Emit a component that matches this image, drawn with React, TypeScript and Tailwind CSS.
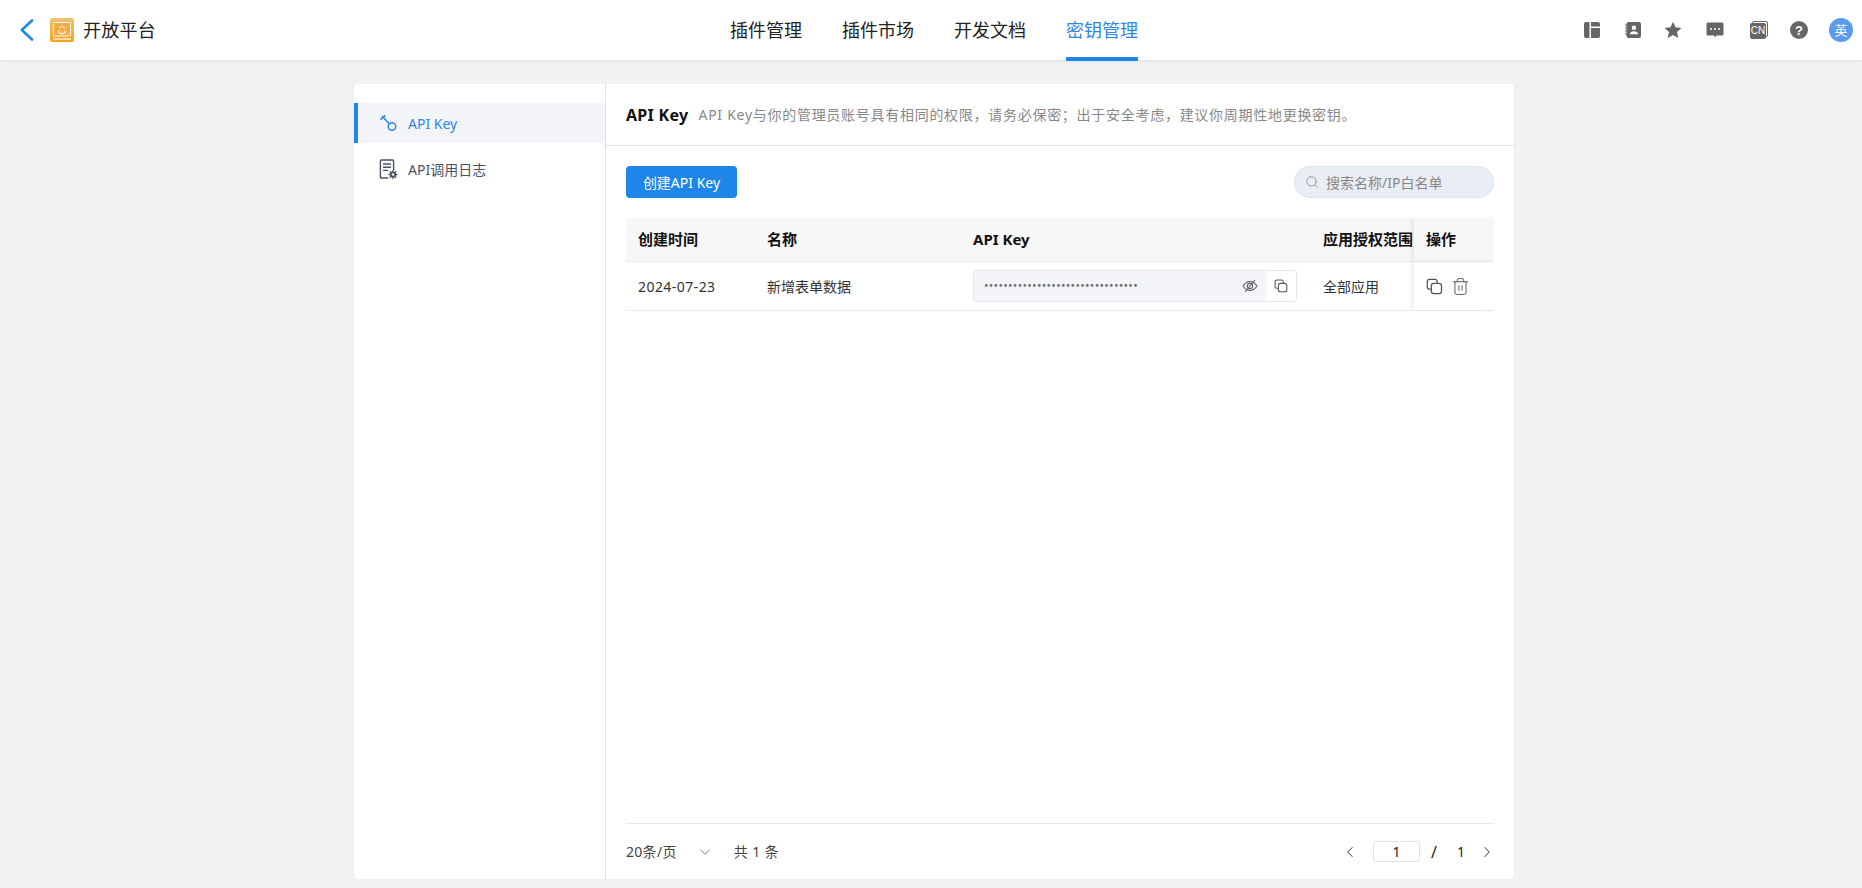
import { ChevronDown, ChevronLeft, ChevronRight, Search, Trash2 } from "lucide-react";

const font = "[font-family:'Noto_Sans','Noto_Sans_CJK_SC',sans-serif]";

function BackIcon() {
  return (
    <svg width="25" height="30" viewBox="0 0 25 30" fill="none" stroke="#1e86e8" strokeWidth="2.6" strokeLinecap="round" strokeLinejoin="round" className="shrink-0">
      <path d="M14 5.500 3.800 15 14 24.500" />
    </svg>
  );
}

function Logo() {
  return (
    <svg width="24" height="24" viewBox="0 0 24 24" className="shrink-0">
      <defs>
        <linearGradient id="lg" x1="0" y1="0" x2="0" y2="1">
          <stop offset="0" stopColor="#efc078" />
          <stop offset="1" stopColor="#f4a41c" />
        </linearGradient>
      </defs>
      <rect width="24" height="24" rx="2.500" fill="url(#lg)" />
      <rect x="3.500" y="4.500" width="17" height="13.500" rx="1" fill="#f1ad45" stroke="#fff" strokeOpacity="0.9" strokeWidth="1" />
      <path d="M8.800 12.500a3.200 3.200 0 0 0 6.400 0" fill="none" stroke="#fff" strokeWidth="1.200" />
      <path d="M9.500 10.500q2.500-4.500 5 0" fill="none" stroke="#fff" strokeOpacity="0.85" strokeWidth="1.200" />
      <rect x="3" y="20.500" width="18" height="1.200" fill="#fff" fillOpacity="0.95" />
    </svg>
  );
}

function KeyIcon() {
  return (
    <svg width="20" height="20" viewBox="0 0 20 20" fill="none" stroke="#2f86e6" strokeWidth="1.500" className="shrink-0">
      <circle cx="14" cy="13.500" r="3.800" />
      <path d="M11.200 10.800 4 3" />
      <path d="M2.400 6.600 7.400 2.400" />
    </svg>
  );
}

function LogIcon() {
  return (
    <svg width="20" height="20" viewBox="0 0 20 20" fill="none" className="shrink-0">
      <path d="M10 19H3.400a1 1 0 0 1-1-1V2a1 1 0 0 1 1-1h11.200a1 1 0 0 1 1 1v9" stroke="#4a5266" strokeWidth="1.400" />
      <path d="M5 5h8M5 8.200h8M5 11.400h5" stroke="#4a5266" strokeWidth="1.400" />
      <circle cx="15" cy="15.500" r="3" fill="#4a5266" />
      <path d="M15 11v9M10.500 15.500h9M11.800 12.300l6.400 6.400M18.200 12.300l-6.400 6.400" stroke="#4a5266" strokeWidth="1.300" />
      <circle cx="15" cy="15.500" r="1.200" fill="#fff" />
    </svg>
  );
}

function CopyIcon({ size = 14 }: { size?: number }) {
  return (
    <svg width={size} height={size} viewBox="0 0 16 16" fill="none" stroke="#555" strokeWidth="1.200" className="shrink-0">
      <path d="M10.500 4.600V3.200a2 2 0 0 0-2-2H3.200a2 2 0 0 0-2 2v5.300a2 2 0 0 0 2 2h1.400" />
      <rect x="5" y="5" width="9.600" height="9.600" rx="2.400" />
    </svg>
  );
}

function EyeOff() {
  return (
    <svg width="16" height="16" viewBox="0 0 16 16" fill="none" stroke="#666" strokeWidth="1.100" className="shrink-0">
      <path d="M1 8c1.800-3 4.200-4.400 7-4.400S13.200 5 15 8c-1.800 3-4.200 4.400-7 4.400S2.800 11 1 8z" />
      <circle cx="8" cy="8" r="2.600" />
      <path d="M3 14 13 2" />
    </svg>
  );
}

function TopIcons() {
  return (
    <div className="flex items-center">
      <svg width="18" height="18" viewBox="0 0 18 18">
        <path d="M3 1h3.500v16H3a2 2 0 0 1-2-2V3a2 2 0 0 1 2-2zM8 1h7a2 2 0 0 1 2 2v2.500H8zM8 7h9v8a2 2 0 0 1-2 2H8z" fill="#666" />
      </svg>
      <svg width="18" height="18" viewBox="0 0 18 18" className="ml-[23px]">
        <rect x="2.500" y="1" width="14.500" height="16" rx="2" fill="#666" />
        <path d="M1 4h3M1 7h3M1 10h3M1 13h3" stroke="#666" strokeWidth="1.200" />
        <circle cx="10" cy="6.800" r="2.200" fill="#fff" />
        <path d="M5.800 13.200c0-4 8.400-4 8.400 0z" fill="#fff" />
      </svg>
      <svg width="18" height="18" viewBox="0 0 18 18" className="ml-[22px]">
        <path d="M9 .8l2.500 5.500 6 .7-4.500 4 1.300 6L9 14l-5.300 3 1.300-6-4.500-4 6-.7z" fill="#666" />
      </svg>
      <svg width="18" height="18" viewBox="0 0 18 18" className="ml-[24px]">
        <path d="M2 1.500h14a1.500 1.500 0 0 1 1.500 1.500v10a1.500 1.500 0 0 1-1.500 1.500h-5.300L8.500 16.800V14.500H2A1.500 1.500 0 0 1 .5 13V3A1.500 1.500 0 0 1 2 1.500z" fill="#666" />
        <circle cx="5" cy="8" r="1" fill="#fff" />
        <circle cx="9" cy="8" r="1" fill="#fff" />
        <circle cx="13" cy="8" r="1" fill="#fff" />
      </svg>
      <div className="relative ml-[26px] h-[18px] w-[18px]">
        <div className="absolute right-0 top-0 h-[16px] w-[16px] rounded-[2px] border border-[#666]" />
        <div className="absolute bottom-0 left-0 flex h-[16px] w-[16px] items-center justify-center rounded-[2px] bg-[#666] text-[10px] leading-none text-white [font-family:'Liberation_Sans',sans-serif]">
          CN
        </div>
      </div>
      <div className="ml-[22px] flex h-[18px] w-[18px] items-center justify-center rounded-full bg-[#666] text-[13px] font-bold leading-none text-white [font-family:'Liberation_Sans',sans-serif]">
        ?
      </div>
      <div className="ml-[21px] flex h-[24px] w-[24px] items-center justify-center rounded-full bg-[#5b9bee] text-[13px] leading-none text-white">
        英
      </div>
    </div>
  );
}

function Header() {
  const tabs = ["插件管理", "插件市场", "开发文档", "密钥管理"];
  return (
    <header className="relative z-10 flex h-[60px] items-center bg-white pl-[18px] pr-[9px] shadow-[0_1px_4px_rgba(0,0,0,0.08)]">
      <BackIcon />
      <div className="ml-[7px]">
        <Logo />
      </div>
      <span className="ml-[9px] w-[73px] text-[18px] leading-none tracking-[0.25px] text-[#222]">开放平台</span>
      <nav className="ml-[574px] flex h-full flex-1 gap-[40px]">
        {tabs.map((t, i) => (
          <div key={t} className="relative flex h-full items-center">
            <span className={"text-[18px] leading-none " + (i === 3 ? "text-[#2f86e6]" : "text-[#222]")}>{t}</span>
            {i === 3 && <div className="absolute bottom-[-1px] left-0 h-[4px] w-full bg-[#1e86e8]" />}
          </div>
        ))}
      </nav>
      <TopIcons />
    </header>
  );
}

function Sidebar() {
  return (
    <aside className="w-[252px] shrink-0 border-r border-[#dfe1e8] pt-[19px]">
      <div className="flex h-[40px] items-center gap-[10px] border-l-[4px] border-[#1e86e8] bg-[#f3f4f8] pl-[20px] text-[14px] text-[#2f86e6]">
        <KeyIcon />
        API Key
      </div>
      <div className="mt-[6px] flex h-[40px] items-center gap-[10px] pl-[24px] text-[14px] text-[#4a5266]">
        <LogIcon />
        API调用日志
      </div>
    </aside>
  );
}

const cols = "grid grid-cols-[129px_206px_350px_103px_80px]";

function KeyTable() {
  return (
    <div className="mt-[20px] text-[14px] text-[#333]">
      <div className={cols + " h-[44px] items-center border-b border-[#e8ebf2] bg-[#f7f7f8] text-[15px] font-bold text-[#111]"}>
        <div className="pl-[12px]">创建时间</div>
        <div className="pl-[12px]">名称</div>
        <div className="pl-[12px]">API Key</div>
        <div className="whitespace-nowrap pl-[12px]">应用授权范围</div>
        <div className="flex h-full items-center bg-[#f7f7f8] pl-[12px] shadow-[-3px_0_4px_rgba(0,0,0,0.06)]">操作</div>
      </div>
      <div className={cols + " h-[49px] items-center border-b border-[#e8ebf2]"}>
        <div className="pl-[12px] tracking-[0.45px]">2024-07-23</div>
        <div className="pl-[12px]">新增表单数据</div>
        <div className="pl-[12px]">
          <div className="flex h-[32px] w-[324px] items-center overflow-hidden rounded-[3px] border border-[#e3e6ee] bg-[#f3f5f9]">
            <span className="ml-[10px] flex-1 text-[12px] leading-none tracking-[0.3px] text-[#777]">
              ••••••••••••••••••••••••••••••••
            </span>
            <EyeOff />
            <div className="ml-[8px] flex h-full w-[30px] items-center justify-center bg-white">
              <CopyIcon size={14} />
            </div>
          </div>
        </div>
        <div className="pl-[12px]">全部应用</div>
        <div className="flex h-full items-center gap-[8px] pl-[12px] shadow-[-3px_0_4px_rgba(0,0,0,0.06)]">
          <CopyIcon size={17} />
          <Trash2 size={19} strokeWidth={1.2} color="#555" />
        </div>
      </div>
    </div>
  );
}

function Footer() {
  return (
    <div className="flex h-[56px] items-center justify-between border-t border-[#e8e8ec] text-[14px] text-[#444]">
      <div className="flex items-center">
        <span className="tracking-[0.3px]">20条/页</span>
        <ChevronDown size={18} strokeWidth={1.3} color="#777" className="ml-[19px]" />
        <span className="ml-[20px] tracking-[0.4px]">共 1 条</span>
      </div>
      <div className="flex items-center text-[#222]">
        <ChevronLeft size={18} strokeWidth={1.4} color="#555" />
        <div className="ml-[14px] flex h-[21px] w-[47px] items-center justify-center rounded-[3px] border border-[#dcdfe6]">1</div>
        <span className="ml-[11px] text-[16px] leading-none">/</span>
        <span className="ml-[20px]">1</span>
        <ChevronRight size={18} strokeWidth={1.4} color="#555" className="ml-[13px] mr-[-2px]" />
      </div>
    </div>
  );
}

export default function App() {
  return (
    <div className={font + " flex h-[888px] w-full flex-col overflow-hidden bg-[#f1f2f4]"}>
      <Header />
      <main className="flex-1 pb-[9px] pl-[354px] pr-[348px] pt-[24px]">
        <div className="flex h-full overflow-hidden rounded-[4px] bg-white shadow-[0_0_3px_rgba(0,0,0,0.05)]">
          <Sidebar />
          <section className="flex min-w-0 flex-1 flex-col">
            <div className="flex h-[62px] shrink-0 items-center border-b border-[#dfe1e8] pl-[20px]">
              <span className="text-[16px] font-bold tracking-[0.3px] text-[#111]">API Key</span>
              <span className="ml-[10px] text-[14px] tracking-[0.72px] text-[#888]">
                API Key与你的管理员账号具有相同的权限，请务必保密；出于安全考虑，建议你周期性地更换密钥。
              </span>
            </div>
            <div className="flex min-h-0 flex-1 flex-col px-[20px] pt-[20px]">
              <div className="flex items-center justify-between">
                <button className="h-[32px] w-[111px] rounded-[4px] bg-[#1e86e8] text-[14px] text-white">创建API Key</button>
                <div className="flex h-[32px] w-[200px] items-center rounded-full border border-[#dde1ea] bg-[#e9edf4] pl-[10px] text-[14px] text-[#888]">
                  <Search size={14} strokeWidth={1.4} color="#888" />
                  <span className="ml-[7px]">搜索名称/IP白名单</span>
                </div>
              </div>
              <KeyTable />
              <div className="flex-1" />
              <Footer />
            </div>
          </section>
        </div>
      </main>
    </div>
  );
}
